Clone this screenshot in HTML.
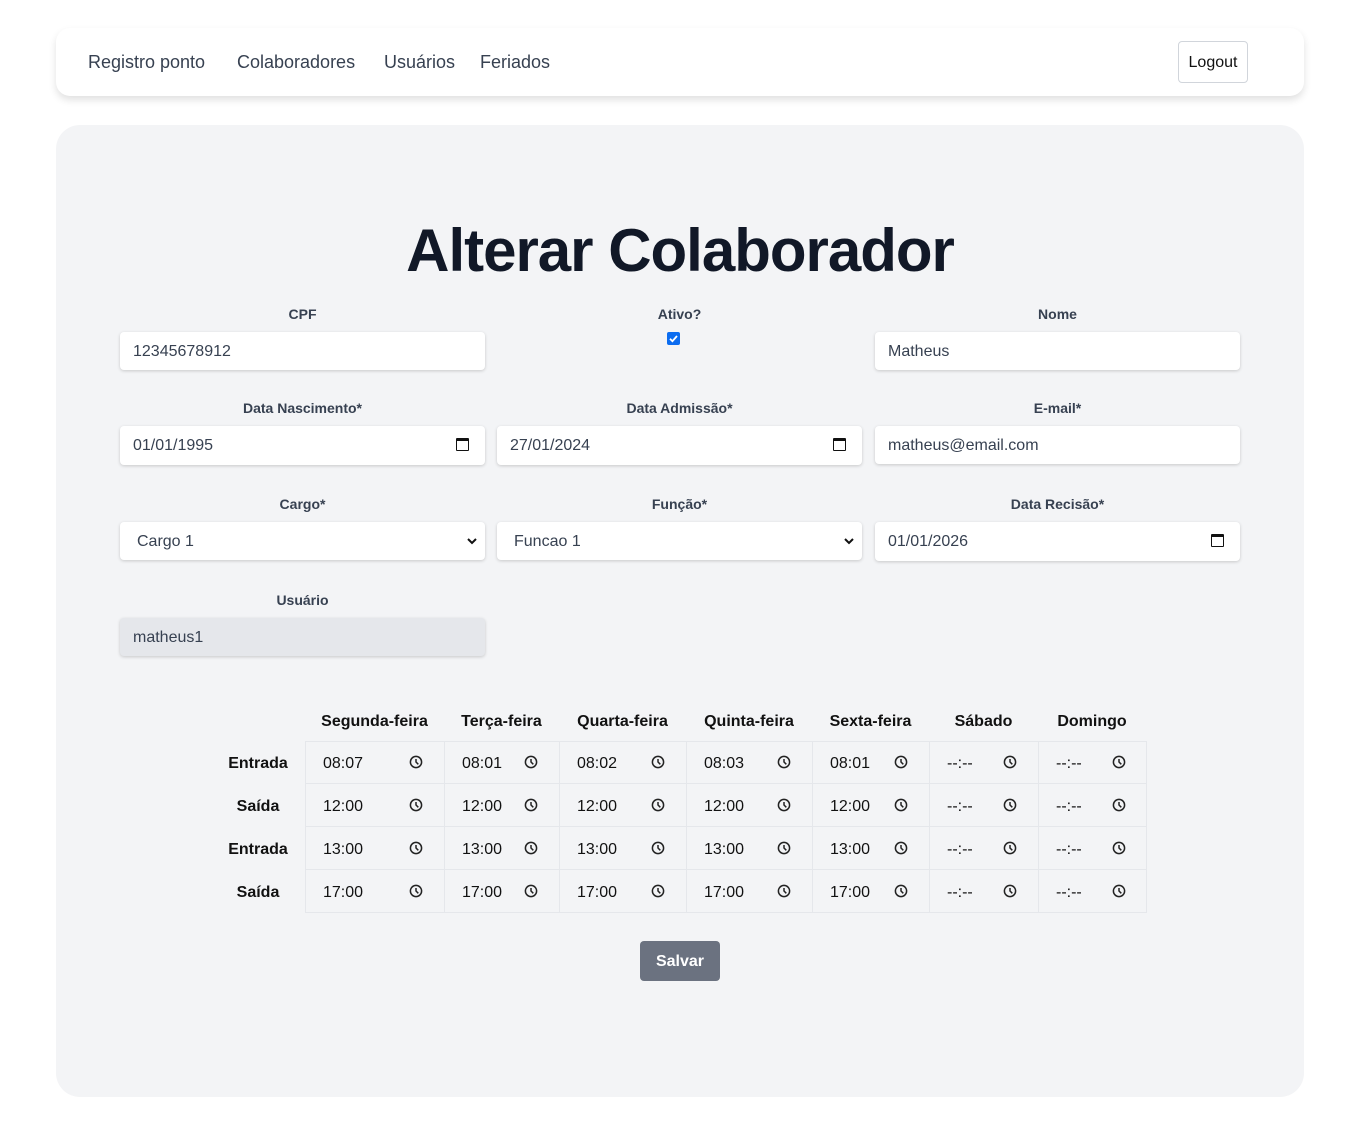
<!DOCTYPE html>
<html><head><meta charset="utf-8">
<style>
*{box-sizing:border-box;margin:0;padding:0}
body{width:1360px;height:1125px;background:#fff;font-family:"Liberation Sans",sans-serif;position:relative;overflow:hidden;color:#111827}
.abs{position:absolute}
.nav{left:56px;top:28px;width:1248px;height:68px;background:#fff;border-radius:14px;box-shadow:0 4px 8px rgba(0,0,0,.12)}
.nav a{position:absolute;top:24px;font-size:18px;color:#374151;text-decoration:none;font-weight:500}
.logout{left:1122px;top:13px;width:70px;height:42px;border:1px solid #d1d5db;border-radius:4px;font-size:16px;line-height:42px;text-align:center;color:#111}
.main{left:56px;top:125px;width:1248px;height:972px;background:#f3f4f6;border-radius:24px}
h1{position:absolute;left:0;width:1360px;top:216px;text-align:center;font-size:60px;font-weight:bold;color:#111827;letter-spacing:-1px}
.lbl{position:absolute;width:365px;text-align:center;font-size:14px;font-weight:bold;color:#374151}
.inp{position:absolute;width:365px;height:38px;background:#fff;border-radius:4px;box-shadow:0 1px 3px rgba(0,0,0,.18);font-size:16px;color:#374151;padding-left:13px;line-height:40px}
.inp.dis{background:#e5e7eb}
.cal{position:absolute;right:16px;top:12px;width:13px;height:13px;border:1.5px solid #111;border-top-width:3px;border-radius:1px}
.chev{position:absolute;right:6px;top:12px}
.th{position:absolute;top:713px;font-size:16px;font-weight:bold;text-align:center;color:#111}
.rl{position:absolute;left:205px;width:106px;text-align:center;font-size:16px;font-weight:bold;color:#111}
.grid{left:305px;top:741px;width:842px;height:172px;border:1px solid #e5e7eb}
.vl{position:absolute;top:741px;width:1px;height:172px;background:#e5e7eb}
.hl{position:absolute;left:305px;width:842px;height:1px;background:#e5e7eb}
.btn{left:640px;top:941px;width:80px;height:40px;background:#6b7280;border-radius:4px;color:#fff;font-weight:bold;font-size:16px;text-align:center;line-height:42px}
</style></head><body>
<div class="abs nav">
<a style="left:32px">Registro ponto</a>
<a style="left:181px">Colaboradores</a>
<a style="left:328px">Usuários</a>
<a style="left:424px">Feriados</a>
<div class="abs logout">Logout</div>
</div>
<div class="abs main"></div>
<h1>Alterar Colaborador</h1>

<div class="lbl" style="left:120px;top:306px">CPF</div>
<div class="inp" style="left:120px;top:332px">12345678912</div>
<div class="lbl" style="left:497px;top:306px">Ativo?</div>
<div class="abs" style="left:667px;top:332px;width:13px;height:13px;background:#0b6cf0;border-radius:2px"><svg width="13" height="13" viewBox="0 0 13 13" style="display:block"><path d="M3 6.8l2.4 2.4L10 4" fill="none" stroke="#fff" stroke-width="1.8"/></svg></div>
<div class="lbl" style="left:875px;top:306px">Nome</div>
<div class="inp" style="left:875px;top:332px">Matheus</div>

<div class="lbl" style="left:120px;top:400px">Data Nascimento*</div>
<div class="inp" style="left:120px;top:426px;height:39px">01/01/1995<div class="cal"></div></div>
<div class="lbl" style="left:497px;top:400px">Data Admissão*</div>
<div class="inp" style="left:497px;top:426px;height:39px">27/01/2024<div class="cal"></div></div>
<div class="lbl" style="left:875px;top:400px">E-mail*</div>
<div class="inp" style="left:875px;top:426px">matheus@email.com</div>

<div class="lbl" style="left:120px;top:496px">Cargo*</div>
<div class="inp" style="left:120px;top:522px;padding-left:17px">Cargo 1<svg class="chev" width="14" height="14" viewBox="0 0 14 14"><path d="M3 5l4 4 4-4" fill="none" stroke="#111" stroke-width="2"/></svg></div>
<div class="lbl" style="left:497px;top:496px">Função*</div>
<div class="inp" style="left:497px;top:522px;padding-left:17px">Funcao 1<svg class="chev" width="14" height="14" viewBox="0 0 14 14"><path d="M3 5l4 4 4-4" fill="none" stroke="#111" stroke-width="2"/></svg></div>
<div class="lbl" style="left:875px;top:496px">Data Recisão*</div>
<div class="inp" style="left:875px;top:522px;height:39px">01/01/2026<div class="cal"></div></div>

<div class="lbl" style="left:120px;top:592px">Usuário</div>
<div class="inp dis" style="left:120px;top:618px">matheus1</div>

<div class="th" style="left:305px;width:139px">Segunda-feira</div>
<div class="th" style="left:444px;width:115px">Terça-feira</div>
<div class="th" style="left:559px;width:127px">Quarta-feira</div>
<div class="th" style="left:686px;width:126px">Quinta-feira</div>
<div class="th" style="left:812px;width:117px">Sexta-feira</div>
<div class="th" style="left:929px;width:109px">Sábado</div>
<div class="th" style="left:1038px;width:108px">Domingo</div>

<div class="abs grid"></div>
<div class="vl" style="left:444px"></div><div class="vl" style="left:559px"></div><div class="vl" style="left:686px"></div><div class="vl" style="left:812px"></div><div class="vl" style="left:929px"></div><div class="vl" style="left:1038px"></div>
<div class="hl" style="top:783px"></div><div class="hl" style="top:826px"></div><div class="hl" style="top:869px"></div>

<div class="rl" style="top:755px">Entrada</div>
<div class="rl" style="top:798px">Saída</div>
<div class="rl" style="top:841px">Entrada</div>
<div class="rl" style="top:884px">Saída</div>

<svg class="abs" style="left:0;top:0" width="1360" height="1125">
<defs><g id="c"><circle cx="0" cy="0" r="5.6" fill="none" stroke="#222" stroke-width="1.5"/><path d="M0 -3V0l2.3 2.3" fill="none" stroke="#222" stroke-width="1.5"/></g></defs>
<g font-family="Liberation Sans, sans-serif" font-size="16" fill="#111">
<text x="323" y="768">08:07</text><text x="462" y="768">08:01</text><text x="577" y="768">08:02</text><text x="704" y="768">08:03</text><text x="830" y="768">08:01</text><text x="947" y="768">--:--</text><text x="1056" y="768">--:--</text>
<text x="323" y="811">12:00</text><text x="462" y="811">12:00</text><text x="577" y="811">12:00</text><text x="704" y="811">12:00</text><text x="830" y="811">12:00</text><text x="947" y="811">--:--</text><text x="1056" y="811">--:--</text>
<text x="323" y="854">13:00</text><text x="462" y="854">13:00</text><text x="577" y="854">13:00</text><text x="704" y="854">13:00</text><text x="830" y="854">13:00</text><text x="947" y="854">--:--</text><text x="1056" y="854">--:--</text>
<text x="323" y="897">17:00</text><text x="462" y="897">17:00</text><text x="577" y="897">17:00</text><text x="704" y="897">17:00</text><text x="830" y="897">17:00</text><text x="947" y="897">--:--</text><text x="1056" y="897">--:--</text>
</g>
<g>
<use href="#c" x="416" y="762"/><use href="#c" x="531" y="762"/><use href="#c" x="658" y="762"/><use href="#c" x="784" y="762"/><use href="#c" x="901" y="762"/><use href="#c" x="1010" y="762"/><use href="#c" x="1119" y="762"/>
<use href="#c" x="416" y="805"/><use href="#c" x="531" y="805"/><use href="#c" x="658" y="805"/><use href="#c" x="784" y="805"/><use href="#c" x="901" y="805"/><use href="#c" x="1010" y="805"/><use href="#c" x="1119" y="805"/>
<use href="#c" x="416" y="848"/><use href="#c" x="531" y="848"/><use href="#c" x="658" y="848"/><use href="#c" x="784" y="848"/><use href="#c" x="901" y="848"/><use href="#c" x="1010" y="848"/><use href="#c" x="1119" y="848"/>
<use href="#c" x="416" y="891"/><use href="#c" x="531" y="891"/><use href="#c" x="658" y="891"/><use href="#c" x="784" y="891"/><use href="#c" x="901" y="891"/><use href="#c" x="1010" y="891"/><use href="#c" x="1119" y="891"/>
</g>
</svg>

<div class="abs btn">Salvar</div>
</body></html>
